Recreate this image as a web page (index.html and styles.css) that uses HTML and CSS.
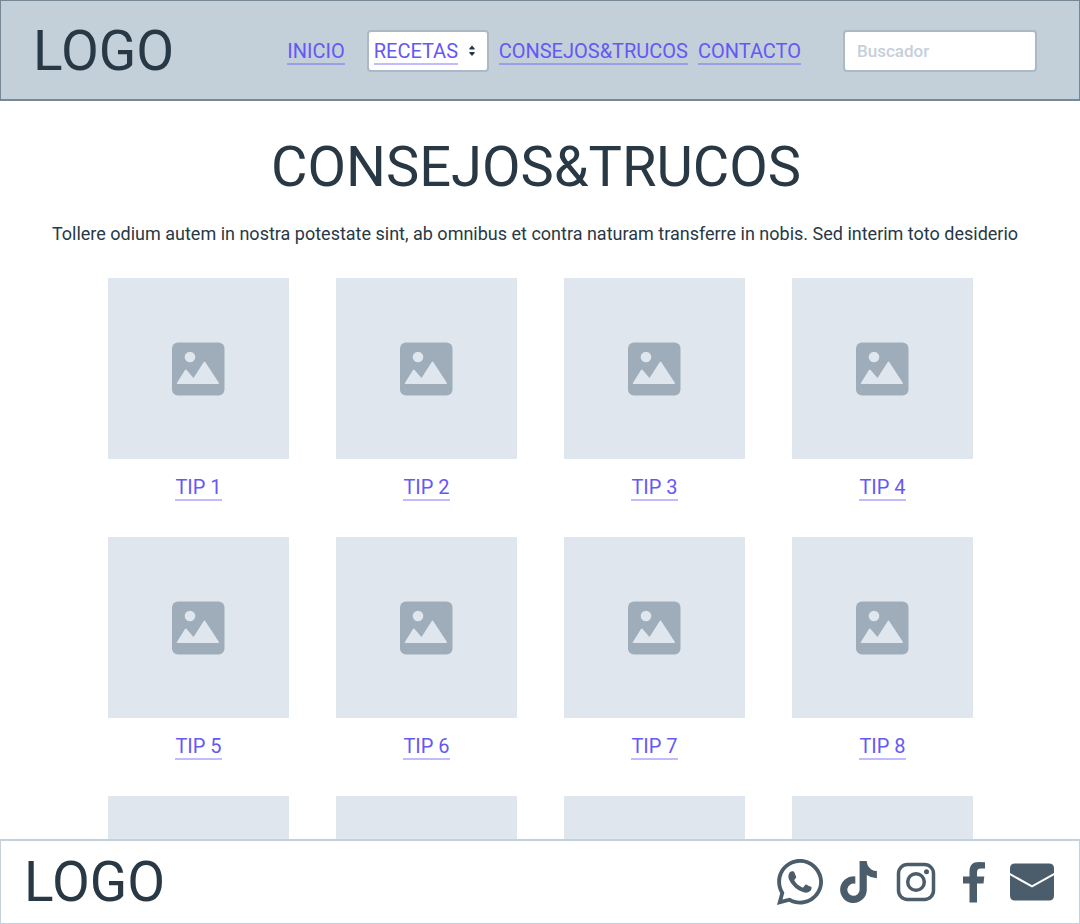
FILE: index.html
```html
<!DOCTYPE html>
<html lang="es">
<head>
<meta charset="utf-8">
<meta name="viewport" content="width=device-width, initial-scale=1">
<title>Consejos&amp;Trucos</title>
<link rel="stylesheet" href="styles.css">
</head>
<body>
<svg class="sprite" aria-hidden="true">
  <symbol id="picture" viewBox="0 0 54 54">
    <rect class="picture-frame" x="0" y="0.5" width="52.5" height="53" rx="6"/>
    <circle class="picture-cut" cx="18" cy="15" r="5.3"/>
    <path class="picture-cut" d="M5.600 42Q4.300 42 5 40.800L13 28Q13.800 27 14.600 28L21.500 36L31.800 20Q32.500 19 33.200 20L46.800 40.800Q47.400 42 46.200 42Z"/>
  </symbol>
</svg>
<header class="site-header">
  <span class="logo">LOGO</span>
  <nav class="main-nav" aria-label="Principal">
    <a class="link" href="#inicio">INICIO</a>
    <div class="nav-select">
      <select class="nav-select-control" aria-label="Recetas"><option>RECETAS</option></select>
      <svg class="nav-select-arrows" width="8" height="12" viewBox="0 0 8 12" aria-hidden="true"><path d="M4 0.500L6.700 3.500Q7 4.500 6 4.500H2Q1 4.500 1.300 3.500ZM4 11L6.700 8Q7 7 6 7H2Q1 7 1.300 8Z"/></svg>
    </div>
    <a class="link" href="#consejos">CONSEJOS&amp;TRUCOS</a>
    <a class="link" href="#contacto">CONTACTO</a>
  </nav>
  <input class="search" type="search" placeholder="Buscador" aria-label="Buscador">
</header>
<main class="content">
  <h1 class="title">CONSEJOS&amp;TRUCOS</h1>
  <p class="intro">Tollere odium autem in nostra potestate sint, ab omnibus et contra naturam transferre in nobis. Sed interim toto desiderio</p>
  <div class="tips">
    <article class="tip"><div class="thumb"><svg class="picture"><use href="#picture"/></svg></div><a class="link" href="#tip1">TIP 1</a></article>
    <article class="tip"><div class="thumb"><svg class="picture"><use href="#picture"/></svg></div><a class="link" href="#tip2">TIP 2</a></article>
    <article class="tip"><div class="thumb"><svg class="picture"><use href="#picture"/></svg></div><a class="link" href="#tip3">TIP 3</a></article>
    <article class="tip"><div class="thumb"><svg class="picture"><use href="#picture"/></svg></div><a class="link" href="#tip4">TIP 4</a></article>
    <article class="tip"><div class="thumb"><svg class="picture"><use href="#picture"/></svg></div><a class="link" href="#tip5">TIP 5</a></article>
    <article class="tip"><div class="thumb"><svg class="picture"><use href="#picture"/></svg></div><a class="link" href="#tip6">TIP 6</a></article>
    <article class="tip"><div class="thumb"><svg class="picture"><use href="#picture"/></svg></div><a class="link" href="#tip7">TIP 7</a></article>
    <article class="tip"><div class="thumb"><svg class="picture"><use href="#picture"/></svg></div><a class="link" href="#tip8">TIP 8</a></article>
    <article class="tip"><div class="thumb"></div></article>
    <article class="tip"><div class="thumb"></div></article>
    <article class="tip"><div class="thumb"></div></article>
    <article class="tip"><div class="thumb"></div></article>
  </div>
</main>
<footer class="site-footer">
  <span class="logo">LOGO</span>
  <nav class="social" aria-label="Redes sociales">
    <a class="social-link" href="#whatsapp" aria-label="WhatsApp"><svg width="46" height="46" viewBox="0 32 448 448"><path d="M380.9 97.1C339 55.1 283.2 32 223.9 32c-122.4 0-222 99.6-222 222 0 39.1 10.2 77.3 29.6 111L0 480l117.7-30.9c32.4 17.7 68.9 27 106.1 27h.1c122.3 0 224.1-99.6 224.1-222 0-59.3-25.2-115-67.1-157zm-157 341.6c-33.2 0-65.7-8.9-94-25.7l-6.7-4-69.8 18.3L72 359.2l-4.400-7c-18.500-29.400-28.200-63.300-28.200-98.200 0-101.700 82.800-184.500 184.600-184.500 49.300 0 95.600 19.200 130.400 54.100 34.800 34.900 56.200 81.200 56.100 130.500 0 101.800-84.900 184.600-186.600 184.600zm101.200-138.200c-5.500-2.800-32.800-16.200-37.900-18-5.100-1.900-8.800-2.800-12.500 2.800-3.700 5.600-14.300 18-17.600 21.800-3.200 3.700-6.500 4.200-12 1.400-32.600-16.300-54-29.100-75.500-66-5.700-9.800 5.700-9.100 16.300-30.300 1.800-3.700.9-6.900-.5-9.700-1.400-2.800-12.500-30.100-17.100-41.200-4.500-10.800-9.100-10.500-12.500-10.700-3.200-.2-6.900-.2-10.600-.2-3.700 0-9.700 1.400-14.800 6.900-5.100 5.600-19.400 19-19.400 46.300 0 27.300 19.900 53.700 22.600 57.400 2.800 3.700 39.100 59.700 94.800 83.800 35.200 15.200 49 16.500 66.600 13.900 10.700-1.600 32.800-13.400 37.400-26.400 4.600-13 4.600-24.100 3.200-26.400-1.300-2.500-5-3.900-10.500-6.600z"/></svg></a>
    <a class="social-link" href="#tiktok" aria-label="TikTok"><svg width="37" height="42" viewBox="0 0 448 512"><path d="M448 209.900a210 210 0 0 1-122.800-39.200V349.400A162.500 162.500 0 1 1 185 188.300V278.200a74.600 74.600 0 1 0 52.200 71.200V0h88a121 121 0 0 0 1.900 22.200A122 122 0 0 0 381 102.400a121 121 0 0 0 67 20.100Z"/></svg></a>
    <a class="social-link" href="#instagram" aria-label="Instagram"><svg width="40" height="40" viewBox="0 0 40 40"><rect class="stroke" x="2.500" y="2.500" width="35" height="35" rx="9"/><circle class="stroke" cx="20" cy="20" r="8.300"/><circle cx="30.500" cy="9.800" r="2.500"/></svg></a>
    <a class="social-link" href="#facebook" aria-label="Facebook"><svg width="22" height="42" viewBox="0 0 22 42"><path d="M6.500 41.500V22.500H0V15.500H6.500V11C6.500 4 9.500 1 16 1Q19 1 22 1.300V7.500H18C15 7.500 14 9 14 11.500V15.500H21.300L20.500 22.500H14V41.500Z"/></svg></a>
    <a class="social-link" href="#correo" aria-label="Correo"><svg width="44" height="38" viewBox="0 0 44 38"><path d="M5 .5H39Q44 .5 44 5.500V10L22 22.300L0 10V5.500Q0 .5 5 .5ZM0 12.300L22 24.600L44 12.300V32.500Q44 37.500 39 37.500H5Q0 37.500 0 32.500Z"/></svg></a>
  </nav>
</footer>
</body>
</html>
```
FILE: styles.css
```css
:root {
  --ink: #283845;
  --link: #6558f5;
  --link-line: rgba(101, 88, 245, 0.4);
  --mist: #c4d0da;
}

* { box-sizing: border-box; }

body {
  margin: 0;
  height: 100vh;
  display: flex;
  flex-direction: column;
  background: #fff;
  color: var(--ink);
  font-family: Roboto, "Liberation Sans", sans-serif;
}

.sprite { display: none; }

.site-header {
  flex: none;
  display: flex;
  align-items: center;
  padding: 16px 42px 14px 32px;
  background: #c3cfd9;
  border: 1px solid #768796;
  border-bottom-width: 2px;
}

.logo {
  font-size: 55px;
  line-height: 68px;
}

.main-nav {
  display: flex;
  align-items: center;
  gap: 10px;
  margin-left: auto;
}

.link {
  padding-top: 2px;
  color: var(--link);
  font-size: 20px;
  line-height: 24px;
  text-decoration: none;
  border-bottom: 2px solid var(--link-line);
}

.nav-select {
  position: relative;
  margin-left: 12px;
}

.nav-select-control {
  appearance: none;
  display: block;
  width: 122px;
  height: 42px;
  padding: 0 28px 0 5px;
  border: 2px solid #abb9c5;
  border-radius: 4px;
  background: linear-gradient(var(--link-line), var(--link-line)) 5px 31px / 84px 2px no-repeat #fff;
  color: var(--link);
  font: inherit;
  font-size: 20px;
}

.nav-select-arrows {
  position: absolute;
  right: 13px;
  top: 15px;
  fill: var(--ink);
}

.search {
  width: 194px;
  height: 42px;
  margin-left: 42px;
  padding: 0 12px;
  border: 2px solid #abb9c5;
  border-radius: 4px;
  background: #fff;
  color: var(--ink);
  font: inherit;
  font-size: 17px;
  font-weight: 500;
}

.search::placeholder {
  color: var(--mist);
  opacity: 1;
}

.content {
  flex: 1;
  min-height: 0;
  overflow-y: auto;
  scrollbar-width: none;
}

.title {
  margin: 32px 8px 0 0;
  font-size: 56px;
  font-weight: 400;
  line-height: 68px;
  text-align: center;
}

.intro {
  margin: 21px 10px 32px 0;
  font-size: 18px;
  line-height: 24px;
  text-align: center;
}

.tips {
  display: grid;
  grid-template-columns: repeat(4, 1fr);
  gap: 36px 47px;
  padding: 0 107px 36px 108px;
}

.tip {
  display: flex;
  flex-direction: column;
  align-items: center;
  gap: 14px;
}

.thumb {
  width: 100%;
  aspect-ratio: 1;
  display: flex;
  align-items: center;
  justify-content: center;
  background: #dfe6ee;
}

.picture {
  width: 54px;
  height: 54px;
}

.picture-frame { fill: #9eadb9; }
.picture-cut { fill: #dfe6ee; }

.site-footer {
  flex: none;
  display: flex;
  align-items: center;
  justify-content: space-between;
  padding: 7px 23px;
  background: #fff;
  border: 1px solid var(--mist);
  border-top-width: 2px;
}

.social {
  display: flex;
  align-items: center;
  gap: 10px;
}

.social-link {
  width: 48px;
  height: 48px;
  display: flex;
  align-items: center;
  justify-content: center;
  fill: #4b5d6b;
}

.stroke {
  fill: none;
  stroke: #4b5d6b;
  stroke-width: 3.5;
}
```
